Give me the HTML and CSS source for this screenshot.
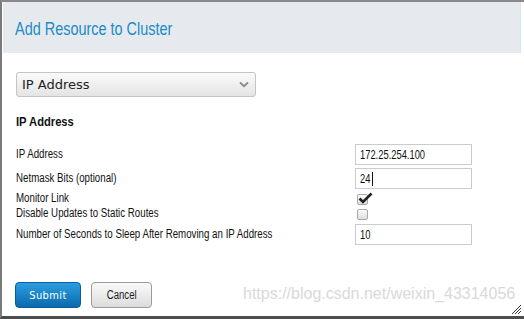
FILE: index.html
```html
<!DOCTYPE html>
<html lang="en">
<head>
    <meta charset="UTF-8">
    <title>Add Resource to Cluster</title>
    <link rel="stylesheet" href="styles.css">
</head>
<body>
    <div class="dialog">
        <div class="dialog-header">
            <h1 class="dialog-title"><span class="narrow">Add Resource to Cluster</span></h1>
        </div>
        <div class="dialog-body">
            <div class="select-box">
                <span class="select-text">IP Address</span>
                <svg class="chevron" width="10" height="7" viewBox="0 0 10 7"><path d="M1 1.5 L5 5.2 L9 1.5" fill="none" stroke="#8c8c8c" stroke-width="2"/></svg>
            </div>
            <h2 class="section-title"><span class="narrow">IP Address</span></h2>
            <div class="form">
                <div class="row row-a">
                    <span class="label"><span class="narrow">IP Address</span></span>
                    <div class="text-input"><span class="narrow">172.25.254.100</span></div>
                </div>
                <div class="row row-b">
                    <span class="label"><span class="narrow">Netmask Bits (optional)</span></span>
                    <div class="text-input"><span class="narrow">24</span><span class="caret"></span></div>
                </div>
                <div class="row row-c">
                    <span class="label"><span class="narrow">Monitor Link</span></span>
                    <span class="checkbox">
                        <svg class="tick" width="15" height="13" viewBox="0 0 15 13"><path d="M1.5 6.5 L5 10 L13.5 1.5" fill="none" stroke="#222" stroke-width="2.6"/></svg>
                    </span>
                </div>
                <div class="row row-d">
                    <span class="label"><span class="narrow">Disable Updates to Static Routes</span></span>
                    <span class="checkbox"></span>
                </div>
                <div class="row row-e">
                    <span class="label"><span class="narrow">Number of Seconds to Sleep After Removing an IP Address</span></span>
                    <div class="text-input"><span class="narrow">10</span></div>
                </div>
            </div>
        </div>
        <div class="dialog-footer">
            <button class="btn btn-primary">Submit</button>
            <button class="btn btn-default"><span class="narrow">Cancel</span></button>
        </div>
        <span class="watermark">https://blog.csdn.net/weixin_43314056</span>
        <svg class="resize" width="12" height="12" viewBox="0 0 12 12"><path d="M2 11 L11 2 M5 11 L11 5 M8 11 L11 8" stroke="#333" stroke-width="1"/></svg>
    </div>
</body>
</html>
```

FILE: styles.css
```css
body {
    margin: 0;
    background: #fff;
    font-family: "Liberation Sans", Arial, sans-serif;
}
/* the original UI font is a narrow face; squeeze Liberation Sans to match */
.narrow {
    display: inline-block;
    white-space: nowrap;
    transform: scaleX(0.81);
    transform-origin: left center;
}
.dialog {
    position: relative;
    box-sizing: border-box;
    width: 524px;
    height: 319px;
    border-top: 2px solid #8a8a8a;
    border-left: 2px solid #7a7a7a;
    border-bottom: 3px solid #4d4d4d;
    background: #fff;
}
.dialog-header {
    height: 51px;
    margin-left: 1px;
    margin-right: 3px;
    background: #e6eaee;
    border-right: 1px solid #d8e4ee;
    display: flex;
    align-items: center;
}
.dialog-title {
    margin: 3px 0 0 12px;
    font-size: 19px;
    font-weight: normal;
    color: #1b8bc9;
}
.dialog-title .narrow {
    transform: scaleX(0.76);
}
.dialog-body {
    padding: 19px 0 0 14px;
}
.select-box {
    box-sizing: border-box;
    width: 240px;
    height: 25px;
    border: 1px solid #c4c4c4;
    border-radius: 3px;
    background: linear-gradient(#fafafa, #e4e4e4);
    display: flex;
    align-items: center;
    justify-content: space-between;
    padding: 0 6px 0 5px;
}
.select-text {
    font-family: "DejaVu Sans", Verdana, sans-serif;
    font-size: 13px;
    color: #222;
}
.section-title {
    margin: 17px 0 0 0;
    font-size: 13px;
    font-weight: bold;
    color: #111;
    height: 30px;
}
.section-title .narrow {
    transform: scaleX(0.86);
}
.form {
    display: flex;
    flex-direction: column;
}
.row {
    display: flex;
    align-items: flex-start;
}
.row-a { height: 24px; }
.row-b { height: 25px; }
.row-c { height: 15px; }
.row-d { height: 16px; }
.row-e { height: 22px; }
.label {
    width: 339px;
    font-size: 12px;
    color: #111;
    line-height: 21px;
}
.row-c .label,
.row-d .label {
    line-height: 11px;
}
.text-input {
    box-sizing: border-box;
    width: 117px;
    height: 21px;
    border: 1px solid #c8ccd0;
    padding: 0 4px;
    font-size: 13px;
    line-height: 19px;
    color: #111;
    display: flex;
    align-items: center;
}
.text-input .narrow {
    transform: scaleX(0.72);
}
.caret {
    display: inline-block;
    width: 1px;
    height: 14px;
    margin-left: -2px;
    background: #111;
}
.checkbox {
    position: relative;
    box-sizing: border-box;
    width: 11px;
    height: 11px;
    margin: 1px 0 0 2px;
    border: 1px solid #a8a8a8;
    border-radius: 2px;
    background: linear-gradient(#fbfbfb, #dedede);
}
.tick {
    position: absolute;
    left: 0;
    top: -3px;
}
.dialog-footer {
    display: flex;
    gap: 10px;
    padding: 36px 0 0 13px;
}
.btn {
    box-sizing: border-box;
    height: 26px;
    border-radius: 4px;
    font-family: "Liberation Sans", Arial, sans-serif;
    font-size: 12px;
    padding: 0;
}
.btn-primary {
    width: 66px;
    border: 1px solid #0a5f9a;
    background: linear-gradient(#2a9ee0, #0a6aac);
    color: #fff;
    font-family: "DejaVu Sans Condensed", "DejaVu Sans", sans-serif;
    font-size: 11px;
    letter-spacing: 0.4px;
}
.btn-default {
    width: 61px;
    border: 1px solid #9a9a9a;
    background: linear-gradient(#fafafa, #dcdcdc);
    color: #222;
}
.btn-default .narrow {
    transform: scaleX(0.8);
    transform-origin: center;
}
.watermark {
    position: absolute;
    left: 241px;
    top: 283px;
    font-family: "Liberation Sans", Arial, sans-serif;
    font-size: 16px;
    color: #d9d9d9;
}
.resize {
    position: absolute;
    right: 2px;
    bottom: 1px;
}
```
